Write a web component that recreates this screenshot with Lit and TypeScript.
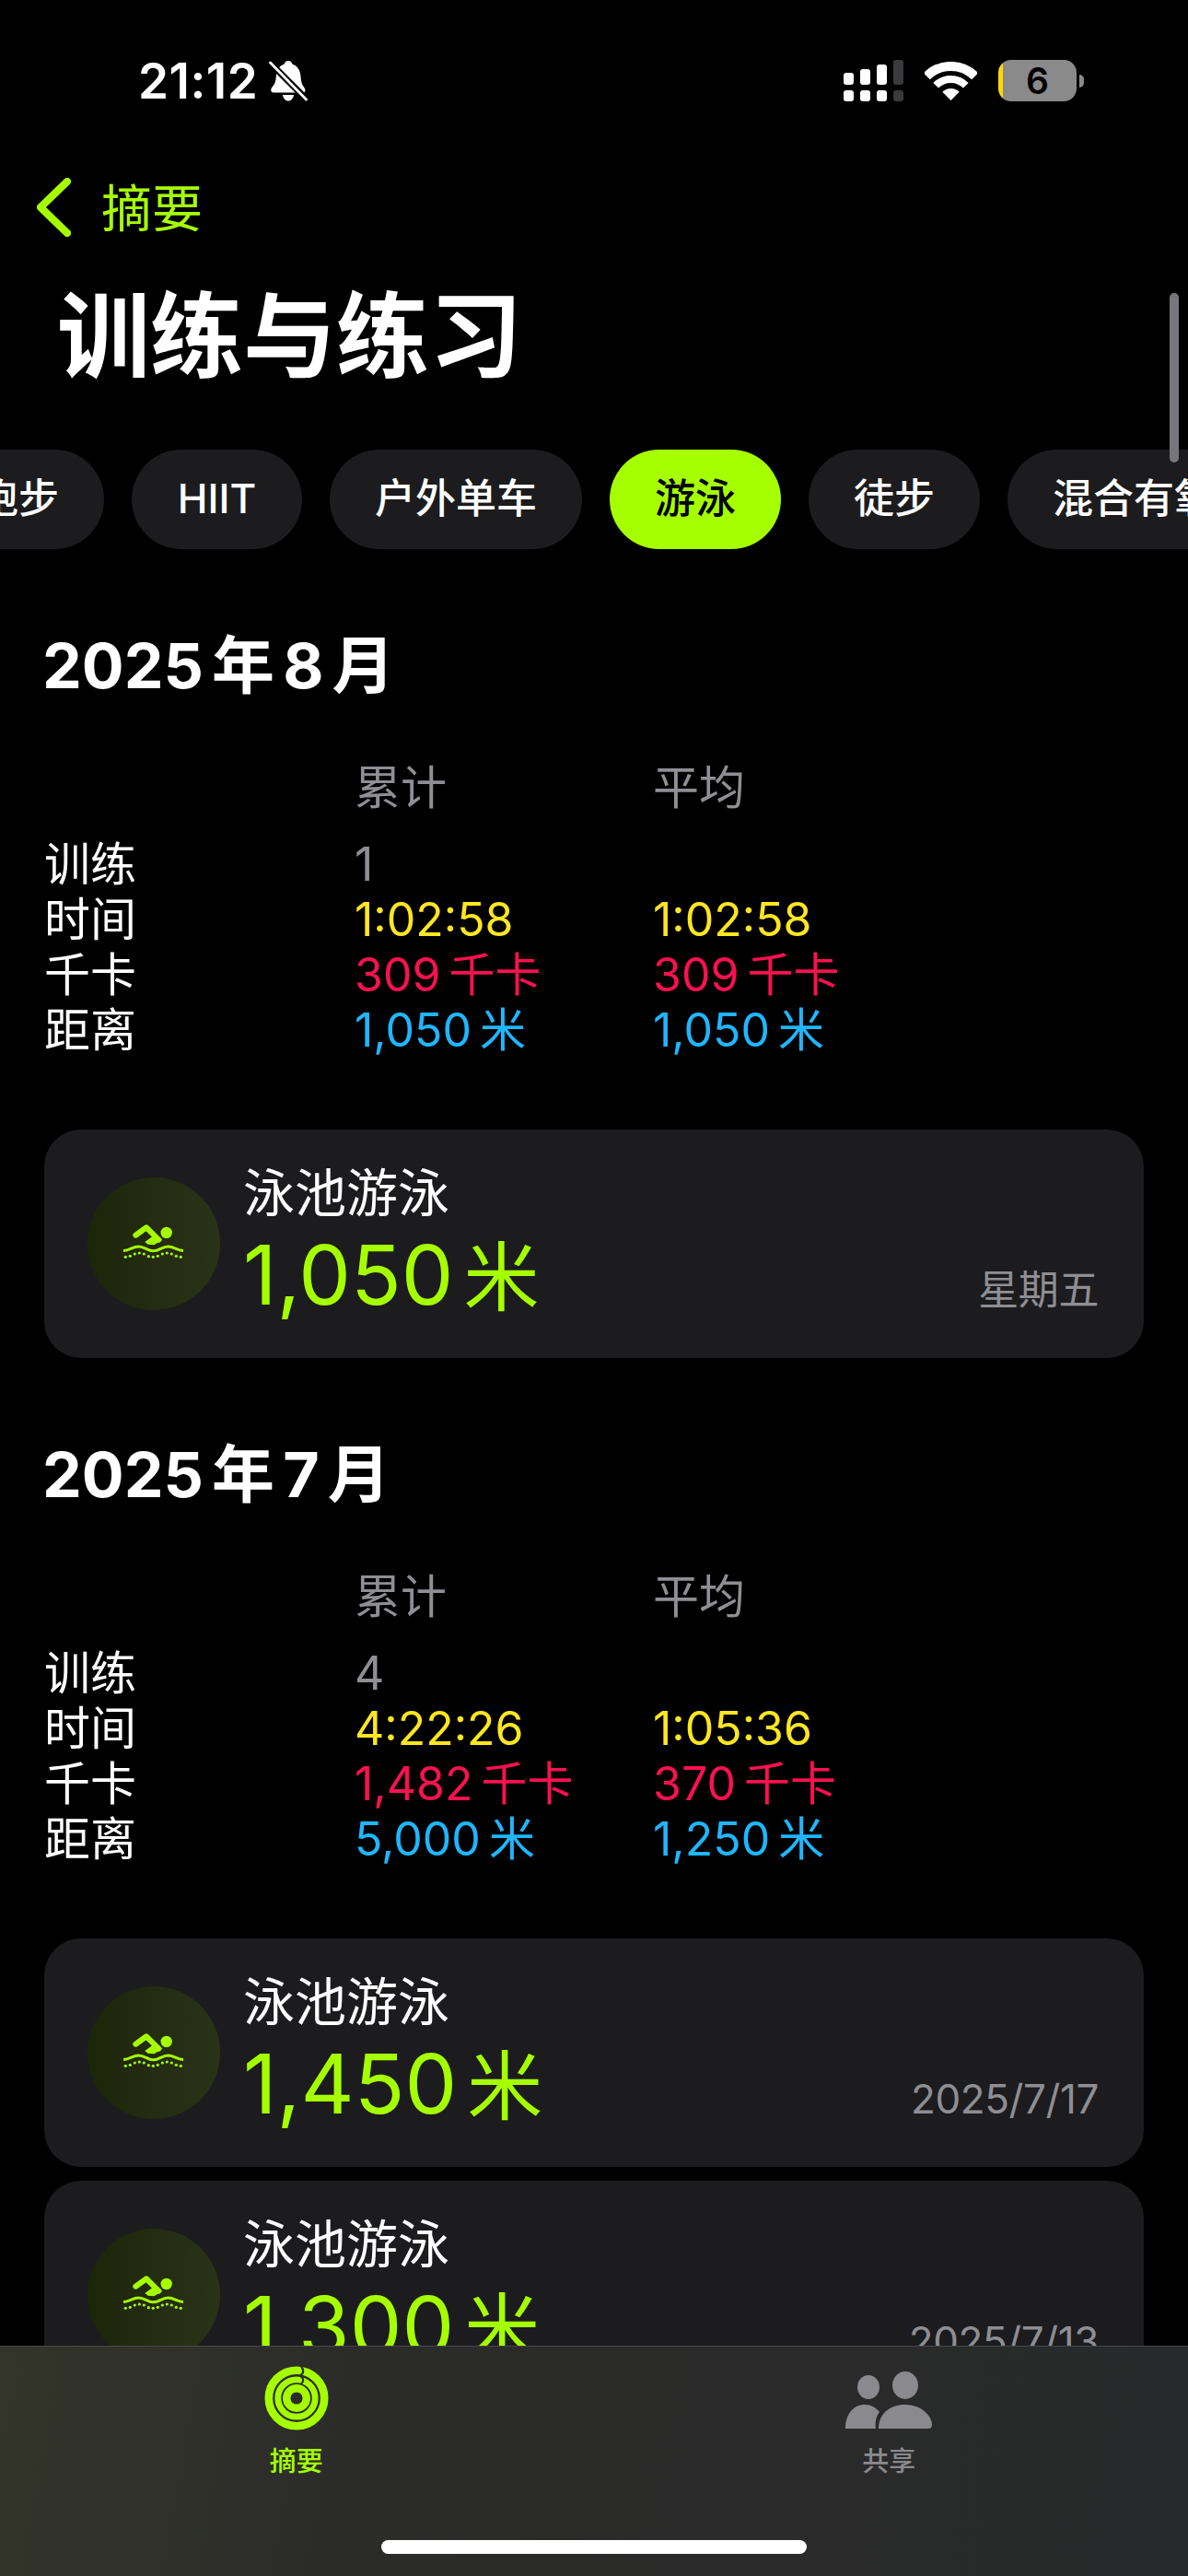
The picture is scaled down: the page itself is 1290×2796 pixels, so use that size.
import { LitElement, html, css, svg } from 'lit';
import { customElement } from 'lit/decorators.js';

interface Workout {
  distance: string;
  date: string;
}

interface Month {
  title: string;
  count: string;
  time: [string, string];
  kcal: [string, string];
  dist: [string, string];
  workouts: Workout[];
}

const TABS = ['跑步', 'HIIT', '户外单车', '游泳', '徒步', '混合有氧'];

const MONTHS: Month[] = [
  {
    title: '2025 年 8 月',
    count: '1',
    time: ['1:02:58', '1:02:58'],
    kcal: ['309 千卡', '309 千卡'],
    dist: ['1,050 米', '1,050 米'],
    workouts: [{ distance: '1,050', date: '星期五' }],
  },
  {
    title: '2025 年 7 月',
    count: '4',
    time: ['4:22:26', '1:05:36'],
    kcal: ['1,482 千卡', '370 千卡'],
    dist: ['5,000 米', '1,250 米'],
    workouts: [
      { distance: '1,450', date: '2025/7/17' },
      { distance: '1,300', date: '2025/7/13' },
    ],
  },
];

// dots under the wave, in the circle's own 144 box
const SWIM_DOTS = [
  [41.3, 86.3], [46.3, 85.3], [51.3, 83], [56.3, 82], [61.3, 83], [66.3, 85.7], [71.3, 86.3],
  [76.3, 85.3], [81.3, 83], [86.3, 82], [91.3, 83], [96.3, 85.3], [101.3, 86.3],
];

const swimIcon = html`
  <svg viewBox="0 0 144 144" width="144" height="144" fill="#a6ff00">
    <circle cx="85.7" cy="60" r="6.2"></circle>
    <path d="M52.3 62.7 64 54.3 77.3 67.7" fill="none" stroke="#a6ff00" stroke-width="6" stroke-linecap="round" stroke-linejoin="round"></path>
    <path d="M62.3 70 72.3 62.7 81.3 67.7 72.3 73.3 65.7 72.7Z"></path>
    <path d="M39 79.5C46 79.5 49 75 55.5 75 62 75 65 79.8 71.5 79.8 78 79.8 81 75 87.5 75 94 75 97 79.5 104 79.5" fill="none" stroke="#a6ff00" stroke-width="3"></path>
    ${SWIM_DOTS.map(([x, y]) => svg`<circle cx=${x} cy=${y} r="1.6"></circle>`)}
  </svg>
`;

@customElement('app-root')
export class AppRoot extends LitElement {
  static styles = css`
    :host {
      display: block;
      position: relative;
      width: 1290px;
      height: 2796px;
      overflow: hidden;
      background: #000;
      color: #fff;
      font-family: Inter, 'Noto Sans CJK SC', sans-serif;
    }
    .status {
      height: 175px;
      display: flex;
      align-items: center;
      padding: 0 113px 0 150px;
      box-sizing: border-box;
    }
    .time {
      font-size: 53px;
      font-weight: 600;
      letter-spacing: 0.5px;
    }
    .bell {
      margin-left: 12px;
    }
    .status-right {
      margin-left: auto;
      display: flex;
      align-items: center;
      gap: 23px;
    }
    .battery {
      display: flex;
      align-items: center;
      gap: 3px;
    }
    .battery-body {
      width: 85px;
      height: 45px;
      border-radius: 14px;
      background: linear-gradient(90deg, #ffd60a 5px, #8a8a8a 5px);
      color: #000;
      font-size: 39px;
      font-weight: 600;
      line-height: 45px;
      text-align: center;
    }
    .battery-nub {
      width: 5px;
      height: 14px;
      border-radius: 0 7px 7px 0;
      background: #8a8a8a;
    }
    .nav {
      height: 100px;
      display: flex;
      align-items: center;
      gap: 33px;
      padding-left: 40px;
      color: #a6ff00;
      font-size: 55px;
    }
    .nav-label {
      padding-bottom: 6px;
    }
    .title {
      height: 180px;
      line-height: 180px;
      padding-left: 62px;
      font-size: 101px;
      font-weight: 700;
    }
    .tabs {
      display: flex;
      gap: 30px;
      margin: 33px 0 0 -73px;
      width: max-content;
    }
    .tab {
      height: 108px;
      min-width: 87px;
      line-height: 106px;
      padding: 0 49px;
      border-radius: 54px;
      background: #1c1c1e;
      font-size: 44px;
      font-weight: 500;
      text-align: center;
      white-space: nowrap;
    }
    .tab.on {
      background: #a6ff00;
      color: #000;
    }
    .month {
      padding-top: 84px;
    }
    .month-title {
      margin-left: 46px;
      height: 84px;
      line-height: 84px;
      font-size: 68px;
      font-weight: 700;
      word-spacing: -7px;
    }
    .stats {
      display: grid;
      grid-template-columns: 337px 324px 1fr;
      grid-template-rows: 83px repeat(4, 60px);
      margin: 61px 0 78px 48px;
      font-size: 50px;
      line-height: 60px;
      word-spacing: -5px;
    }
    .head {
      color: #8e8e93;
    }
    .grey { color: #8e8e93; }
    .yellow { color: #ffe620; }
    .red { color: #fa114f; }
    .blue { color: #1fb6ff; }
    .cards {
      display: flex;
      flex-direction: column;
      gap: 15px;
      margin: 0 48px;
    }
    .card {
      height: 248px;
      flex: none;
      display: flex;
      align-items: center;
      padding: 0 49px 0 47px;
      border-radius: 40px;
      background: #1c1c1e;
    }
    .badge {
      width: 144px;
      height: 144px;
      flex: none;
      border-radius: 50%;
      background: linear-gradient(90deg, #1d2509, #2a3218);
    }
    .card-text {
      align-self: flex-start;
      margin-left: 25px;
      padding-top: 39px;
    }
    .card-name {
      height: 60px;
      line-height: 60px;
      font-size: 56px;
    }
    .card-value {
      margin-top: 9px;
      height: 100px;
      line-height: 100px;
      color: #a6ff00;
      font-size: 90px;
    }
    .card-unit {
      margin-left: 11px;
      font-size: 82px;
    }
    .card-date {
      margin-left: auto;
      align-self: flex-end;
      padding-bottom: 49px;
      line-height: 50px;
      color: #8e8e93;
      font-size: 44px;
      letter-spacing: -0.4px;
    }
    .scroll-thumb {
      position: absolute;
      top: 318px;
      left: 1270px;
      width: 10px;
      height: 184px;
      border-radius: 5px;
      background: #77777b;
    }
    .tabbar {
      position: absolute;
      left: 0;
      right: 0;
      bottom: 0;
      height: 250px;
      box-sizing: border-box;
      display: flex;
      padding: 21px 3px 0 0;
      border-top: 1px solid #47474a;
      background: linear-gradient(100deg, #33352a 0%, #2b2c29 30%, #28292a 100%);
    }
    .tabbar-item {
      flex: 1;
      display: flex;
      flex-direction: column;
      align-items: center;
      color: #8a8a8e;
      font-size: 29px;
      font-weight: 500;
    }
    .tabbar-item.on {
      color: #a6ff00;
    }
    .tabbar-icon {
      height: 70px;
      display: flex;
      align-items: center;
    }
    .tabbar-label {
      margin-top: 14px;
      line-height: 40px;
    }
    .home {
      position: absolute;
      left: 414px;
      bottom: 24px;
      width: 462px;
      height: 15px;
      border-radius: 8px;
      background: #fff;
    }
  `;

  private renderStatus() {
    return html`
      <div class="status">
        <span class="time">21:12</span>
        <svg class="bell" viewBox="0 0 42 44" width="42" height="44">
          <path fill="#fff" d="M21 0c2.4 0 4 1.6 4.3 3.6C31.500 5.500 34 11 34.500 17c.4 6 1.500 9 3.500 11.500 2 2.500 2 6-1 6H5c-3 0-3.500-3.500-1.500-6C6 26 7.500 23 7.800 17 8.200 11 11 5.500 16.700 3.600 17 1.600 18.600 0 21 0ZM15 37h12c-.6 4-3 6.500-6 6.500S15.600 41 15 37Z"></path>
          <path stroke="#000" stroke-width="7" d="M3 4 39 40"></path>
          <path stroke="#fff" stroke-width="2.800" stroke-linecap="round" d="M1.500 2 40.500 42"></path>
        </svg>
        <div class="status-right">
          <svg viewBox="0 0 65 45" width="65" height="45" fill="#fff">
            <rect x="0" y="33" width="11" height="12" rx="3"></rect>
            <rect x="18" y="33" width="11" height="12" rx="3"></rect>
            <rect x="36" y="33" width="11" height="12" rx="3"></rect>
            <rect x="54" y="33" width="11" height="12" rx="3" fill="#3a3a3c"></rect>
            <rect x="0" y="14" width="11" height="13" rx="3"></rect>
            <rect x="18" y="10" width="11" height="17" rx="3"></rect>
            <rect x="36" y="5" width="11" height="22" rx="3"></rect>
            <rect x="54" y="0" width="11" height="27" rx="3" fill="#3a3a3c"></rect>
          </svg>
          <svg viewBox="0 0 57 42" width="57" height="42" fill="none" stroke="#fff">
            <path stroke-width="10" d="M2.300 15.800A37 37 0 0 1 54.700 15.800"></path>
            <path stroke-width="8" d="M12.200 25.700A23 23 0 0 1 44.800 25.700"></path>
            <path fill="#fff" stroke="none" d="M28.500 42 19.300 32.800A13 13 0 0 1 37.700 32.800Z"></path>
          </svg>
          <div class="battery">
            <div class="battery-body">6</div>
            <div class="battery-nub"></div>
          </div>
        </div>
      </div>
    `;
  }

  private renderMonth(m: Month) {
    return html`
      <section class="month">
        <div class="month-title">${m.title}</div>
        <div class="stats">
          <span></span><span class="head">累计</span><span class="head">平均</span>
          <span>训练</span><span class="grey">${m.count}</span><span></span>
          <span>时间</span><span class="yellow">${m.time[0]}</span><span class="yellow">${m.time[1]}</span>
          <span>千卡</span><span class="red">${m.kcal[0]}</span><span class="red">${m.kcal[1]}</span>
          <span>距离</span><span class="blue">${m.dist[0]}</span><span class="blue">${m.dist[1]}</span>
        </div>
        <div class="cards">
          ${m.workouts.map(
            (w) => html`
              <div class="card">
                <div class="badge">${swimIcon}</div>
                <div class="card-text">
                  <div class="card-name">泳池游泳</div>
                  <div class="card-value">${w.distance}<span class="card-unit">米</span></div>
                </div>
                <div class="card-date">${w.date}</div>
              </div>
            `
          )}
        </div>
      </section>
    `;
  }

  render() {
    return html`
      ${this.renderStatus()}
      <div class="nav">
        <svg viewBox="0 0 37 64" width="37" height="64" fill="none" stroke="#a6ff00" stroke-width="8" stroke-linecap="round" stroke-linejoin="round">
          <path d="M33 4 4 32 33 60"></path>
        </svg>
        <span class="nav-label">摘要</span>
      </div>
      <div class="title">训练与练习</div>
      <div class="tabs">
        ${TABS.map((t) => html`<div class="tab ${t === '游泳' ? 'on' : ''}">${t}</div>`)}
      </div>
      ${MONTHS.map((m) => this.renderMonth(m))}
      <div class="scroll-thumb"></div>
      <div class="tabbar">
        <div class="tabbar-item on">
          <div class="tabbar-icon">
            <svg viewBox="-35 -35 70 70" width="70" height="70" fill="none" stroke="#a6ff00">
              <circle r="30.2" stroke-width="8.600"></circle>
              <circle r="20.2" stroke-width="6.800"></circle>
              <circle r="10.8" stroke-width="8.400"></circle>
              <path stroke="#2a2b29" stroke-width="2.200" d="M5 -34.500C8 -31 8 -27 4 -24.500 8 -22 8 -18 5 -15.500"></path>
            </svg>
          </div>
          <div class="tabbar-label">摘要</div>
        </div>
        <div class="tabbar-item">
          <div class="tabbar-icon">
            <svg viewBox="0 0 94 70" width="94" height="70" fill="#8a8a8e">
              <ellipse cx="25" cy="23" rx="12" ry="13"></ellipse>
              <ellipse cx="65" cy="21" rx="14" ry="15"></ellipse>
              <path d="M0 68C0 52 9 42 21 42 28 42 33 45 37 50 33 55 32 62 33 68Z"></path>
              <path d="M36 68C36 52 48 42 65 42 82 42 94 54 94 64 94 67 92 68 90 68Z"></path>
            </svg>
          </div>
          <div class="tabbar-label">共享</div>
        </div>
        <div class="home"></div>
      </div>
    `;
  }
}
